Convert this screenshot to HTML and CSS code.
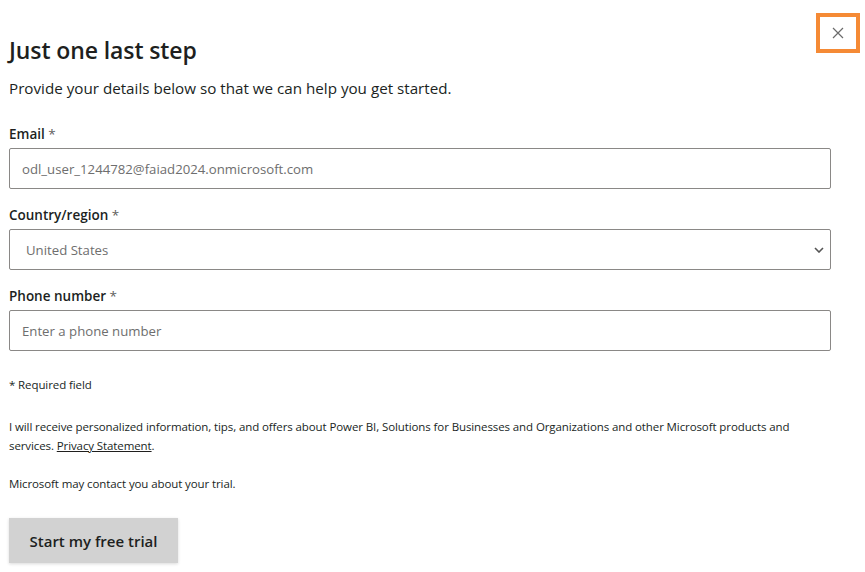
FILE: index.html
```html
<!DOCTYPE html>
<html lang="en">
<head>
<meta charset="utf-8">
<title>Just one last step</title>
<link rel="stylesheet" href="styles.css">
</head>
<body>
<div class="dialog">
  <button class="close" aria-label="Close">
    <svg width="12" height="12" viewBox="0 0 12 12"><path d="M1 1 L11 11 M11 1 L1 11" stroke="#6b6b6b" stroke-width="1.2" fill="none"/></svg>
  </button>
  <h1 class="title">Just one last step</h1>
  <p class="subtitle">Provide your details below so that we can help you get started.</p>
  <form class="form">
    <div class="field">
      <label class="label">Email <span class="req">*</span></label>
      <div class="input">odl_user_1244782@faiad2024.onmicrosoft.com</div>
    </div>
    <div class="field">
      <label class="label">Country/region <span class="req">*</span></label>
      <div class="input select">
        <span>United States</span>
        <svg class="chev" width="10" height="6" viewBox="0 0 10 6"><path d="M1 1 L5 5 L9 1" stroke="#555" stroke-width="1.6" fill="none"/></svg>
      </div>
    </div>
    <div class="field">
      <label class="label">Phone number <span class="req">*</span></label>
      <div class="input">Enter a phone number</div>
    </div>
  </form>
  <p class="small required">* Required field</p>
  <p class="small consent">I will receive personalized information, tips, and offers about Power BI, Solutions for Businesses and Organizations and other Microsoft products and services. <a href="#">Privacy Statement</a>.</p>
  <p class="small contact">Microsoft may contact you about your trial.</p>
  <button class="start">Start my free trial</button>
</div>
</body>
</html>
```
FILE: styles.css
```css
* { box-sizing: border-box; }
html, body { margin: 0; background: #fff; }
body { font-family: "Open Sans", "Noto Sans", sans-serif; color: #201f1e; }
.dialog { position: relative; width: 865px; height: 572px; padding: 0 34px 0 9px; }
.close {
  position: absolute; top: 13px; left: 816px; width: 44px; height: 40px;
  border: 4px solid #f58a35; background: #fff; display: flex; align-items: center; justify-content: center; padding: 0;
}
.title { margin: 0; padding-top: 35px; font-size: 23px; font-weight: 600; line-height: 30px; letter-spacing: -0.1px; }
.subtitle { margin: 12px 0 0; font-size: 15.2px; line-height: 22px; letter-spacing: 0; }
.form { margin-top: 26px; display: flex; flex-direction: column; gap: 17px; }
.field { display: flex; flex-direction: column; gap: 5px; }
.label { font-size: 13.5px; font-weight: 600; line-height: 18px; }
.req { font-weight: 400; color: #605e5c; }
.input {
  height: 41px; border: 1px solid #8a8886; border-radius: 2px; padding: 0 12px;
  display: flex; align-items: center; font-size: 13.2px; color: #6e6e6e;
}
.select { justify-content: space-between; padding-right: 6px; padding-left: 16px; }
.small { font-size: 11.5px; line-height: 19px; margin: 0; letter-spacing: -0.1px; }
.required { margin-top: 24px; }
.consent { margin-top: 23px; padding-right: 30px; }
.consent a { color: inherit; }
.contact { margin-top: 19px; }
.start {
  margin-top: 25px; width: 169px; height: 45px; border: none; background: #d2d2d2;
  font-family: inherit; font-size: 15px; font-weight: 600; color: #201f1e;
  box-shadow: 0 1px 3px rgba(0,0,0,0.15);
}
```
